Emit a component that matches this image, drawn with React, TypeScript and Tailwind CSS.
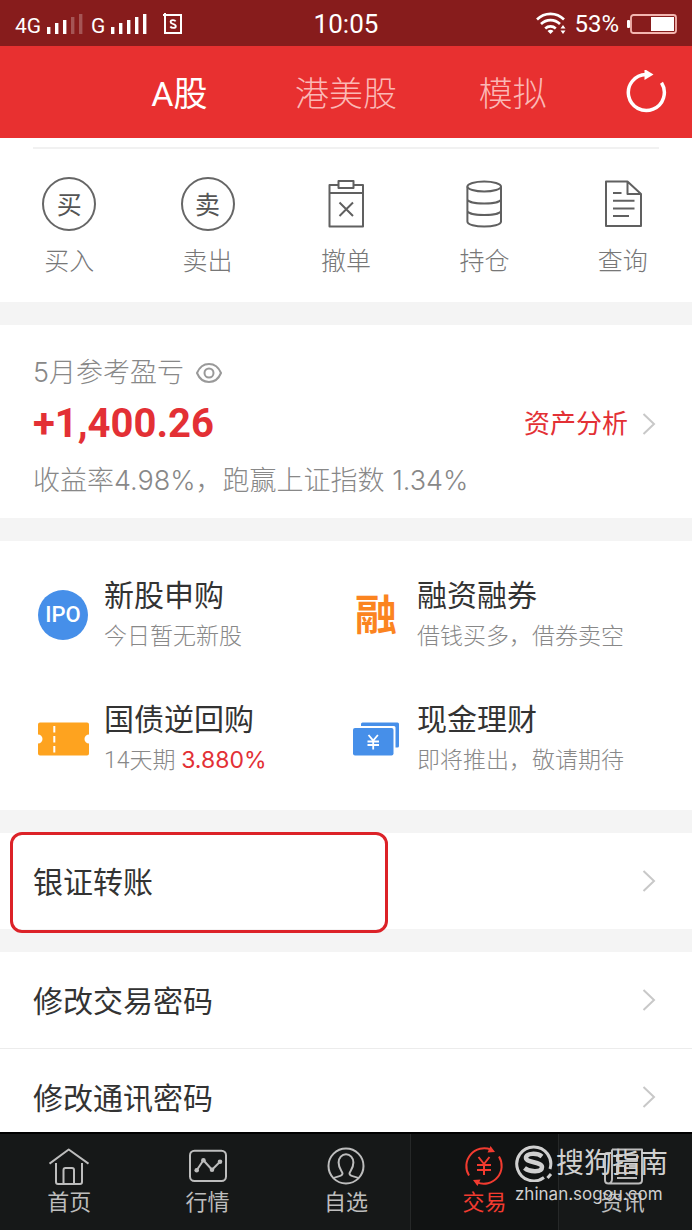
import type { ReactNode } from "react";

const base = "font-['Roboto','Noto_Sans_CJK_SC',sans-serif]";

function Signal({ faded }: { faded: number }) {
  const bars = [7, 11, 14, 17, 20];
  return (
    <svg className="h-5 w-9" viewBox="0 0 36 20" fill="#fff" aria-hidden="true">
      {bars.map((h, i) => (
        <rect key={h} x={i * 8} y={20 - h} width="3.4" height={h} opacity={i >= 5 - faded ? 0.25 : 1} />
      ))}
    </svg>
  );
}

function StatusBar() {
  return (
    <div className="grid h-[46px] shrink-0 grid-cols-3 items-center bg-[#871c1c] px-[15px] pt-px text-white">
      <div className="flex items-center">
        <span className="w-8 pt-1 text-[21px] leading-6">4G</span>
        <Signal faded={2} />
        <span className="ml-2 w-5 pt-1 text-[21px] leading-6">G</span>
        <Signal faded={0} />
        <svg className="ml-4 h-[22px] w-5" viewBox="0 0 20 22" fill="none" stroke="#fff" aria-hidden="true">
          <path d="M2 2h16v18H2z" strokeWidth="2" />
          <path d="M0 2h4M2 0v4" strokeWidth="2" />
          <path d="M12.6 8.4C11.6 6.6 7.6 6.8 7.6 9c0 2.4 5.2 1.6 5.2 4.2 0 2.3-4.4 2.3-5.4.3" strokeWidth="1.8" />
        </svg>
      </div>
      <div className="text-center text-[26px] leading-8">10:05</div>
      <div className="flex items-center justify-end">
        <svg className="h-6 w-[30px]" viewBox="0 0 30 24" fill="none" stroke="#fff" strokeWidth="2.6" aria-hidden="true">
          <path d="M1 7.500a19 19 0 0 1 27 0M5 12a13.500 13.500 0 0 1 19 0M9.200 16.500a7.800 7.800 0 0 1 10.600 0" />
          <path d="M11.500 19a4.500 4.500 0 0 1 6 0L14.500 22z" fill="#fff" stroke="none" />
          <path d="m27 13 2.500 3.500h-5zM27 22l2.500-3.500h-5z" fill="#fff" stroke="none" />
        </svg>
        <span className="ml-2 text-[24px] leading-8">53%</span>
        <svg className="ml-2 h-5 w-[50px]" viewBox="0 0 50 20" aria-hidden="true">
          <rect x="0" y="6" width="3" height="8" rx="1" fill="#fff" />
          <rect x="4" y="1" width="45" height="18" rx="2.5" fill="none" stroke="#f3b5b0" strokeWidth="1.8" />
          <rect x="24" y="3" width="23" height="14" fill="#fff" />
        </svg>
      </div>
    </div>
  );
}

function Header() {
  return (
    <header className="grid h-[92px] shrink-0 grid-cols-[96px_1fr_1fr_1fr_96px] items-center bg-[#e83030] text-[34px] leading-[48px] font-light">
      <span />
      <button className="pt-1 font-normal text-white">A股</button>
      <button className="pt-1 text-[#fbb8b5]">港美股</button>
      <button className="pt-1 text-[#fbb8b5]">模拟</button>
      <button aria-label="刷新" className="flex justify-center pl-1">
        <svg className="size-11" viewBox="0 0 44 44" fill="none">
          <path d="M37.500 12.800A18 18 0 1 1 22 4.500" stroke="#fff" strokeWidth="3.5" />
          <path d="m20.500-1 9 5.500-9 5.500z" fill="#fff" />
        </svg>
      </button>
    </header>
  );
}

function LineIcon({ children }: { children: ReactNode }) {
  return (
    <svg className="size-14" viewBox="0 0 56 56" fill="none" stroke="#606060" strokeWidth="2" strokeLinejoin="round" aria-hidden="true">
      {children}
    </svg>
  );
}

function CircleIcon({ char }: { char: string }) {
  return (
    <span className="flex size-14 items-center justify-center p-px">
      <span className="flex size-full items-center justify-center rounded-full border-2 border-[#666] pt-[3px] text-[25px] leading-9 font-normal text-[#555]">
        {char}
      </span>
    </span>
  );
}

const actions: { label: string; icon: ReactNode }[] = [
  { label: "买入", icon: <CircleIcon char="买" /> },
  { label: "卖出", icon: <CircleIcon char="卖" /> },
  {
    label: "撤单",
    icon: (
      <LineIcon>
        <path d="M20.500 9h-9v41.500h33.500V9h-9.500M11.500 17H45" />
        <path d="M20.500 5h15v7h-15z" />
        <path d="m21.500 26.500 13.500 13.500m0-13.500L21.500 40" />
      </LineIcon>
    ),
  },
  {
    label: "持仓",
    icon: (
      <LineIcon>
        <ellipse cx="28.2" cy="10.5" rx="16.8" ry="5" />
        <path d="M11.400 10.500v35c0 6.700 33.600 6.700 33.600 0v-35M11.400 23c0 6 33.600 6 33.600 0M11.400 34.500c0 6 33.600 6 33.600 0" />
      </LineIcon>
    ),
  },
  {
    label: "查询",
    icon: (
      <LineIcon>
        <path d="M32.500 5.500H11V50h35V18zV18H46" />
        <path d="M18 17h8.500M18 24.700h21.500M18 32.400h21.500M18 40h16" />
      </LineIcon>
    ),
  },
];

function Actions() {
  return (
    <section className="bg-white pt-[9px] pb-[22px]">
      <div className="mx-[33px] h-0.5 bg-[#f1f1f1]" />
      <div className="grid grid-cols-5 pt-[27px]">
        {actions.map((a) => (
          <button key={a.label} className="flex flex-col items-center gap-3 text-[25px] leading-9 font-light text-[#777]">
            {a.icon}
            <span>{a.label}</span>
          </button>
        ))}
      </div>
    </section>
  );
}

function Chevron() {
  return (
    <svg className="h-[22px] w-[14px]" viewBox="0 0 14 22" fill="none" stroke="#c8c8c8" strokeWidth="2" aria-hidden="true">
      <path d="m1.500 1 10.500 10-10.500 10" />
    </svg>
  );
}

function Profit() {
  return (
    <section className="bg-white pt-7 pr-9 pb-[11px] pl-[33px] font-['Inter','Noto_Sans_CJK_SC',sans-serif] font-light text-[#888]">
      <div className="flex items-center gap-3 text-[27px] leading-10">
        <span>5月参考盈亏</span>
        <button aria-label="隐藏金额">
          <svg className="h-5 w-[26px]" viewBox="0 0 26 20" fill="none" stroke="#999" strokeWidth="2">
            <path d="M1 10C6-2 20-2 25 10 20 22 6 22 1 10z" />
            <circle cx="13" cy="10" r="4.5" />
          </svg>
        </button>
      </div>
      <div className="flex h-[62px] items-center justify-between font-['Roboto','Noto_Sans_CJK_SC',sans-serif]">
        <strong className="text-[40px] leading-[62px] font-bold text-[#e33035]">+1,400.26</strong>
        <a href="#analysis" className="flex items-center gap-[14px] text-[26px] leading-10 font-normal text-[#e33035]">
          资产分析
          <Chevron />
        </a>
      </div>
      <p className="text-[27px] leading-[52px]">收益率4.98%，跑赢上证指数 1.34%</p>
    </section>
  );
}

const products: { title: string; sub: ReactNode; icon: ReactNode }[] = [
  {
    title: "新股申购",
    sub: "今日暂无新股",
    icon: (
      <span className="flex size-[50px] items-center justify-center rounded-full bg-[#468fe9] text-[22px] leading-none font-medium text-white">
        IPO
      </span>
    ),
  },
  {
    title: "融资融券",
    sub: "借钱买多，借券卖空",
    icon: <span className="pt-0.5 text-[42px] leading-[50px] font-bold text-[#fb8420]">融</span>,
  },
  {
    title: "国债逆回购",
    sub: (
      <>
        14天期 <span className="font-['Inter',sans-serif] leading-none font-normal text-[#e33035]">3.880%</span>
      </>
    ),
    icon: (
      <svg className="h-[34px] w-[51px]" viewBox="0 0 51 34" aria-hidden="true">
        <path d="M2 .5h47q2 0 2 2v10a4.500 4.500 0 0 0 0 9v10q0 2-2 2H2q-2 0-2-2v-10a4.500 4.500 0 0 0 0-9v-10q0-2 2-2z" fill="#fea31f" />
        <path d="M16.300 4v6.500m0 3.500v6.500m0 3.500v6.500" stroke="#fff" strokeWidth="2" />
      </svg>
    ),
  },
  {
    title: "现金理财",
    sub: "即将推出，敬请期待",
    icon: (
      <svg className="h-[34px] w-[46px]" viewBox="0 0 46 34" fill="#468fe9" aria-hidden="true">
        <path d="M8 2q0-1.500 1.500-1.500h35Q46 .5 46 2v22q0 1.500-1.500 1.500h-2V5.500q0-1.500-1.500-1.500H8z" />
        <rect x="0" y="6" width="40.5" height="27.5" rx="2" />
        <path d="m15.500 13 4.700 5.500 4.700-5.500M14.500 19.500h11.500M14.500 23h11.500M20.200 18.500v9" fill="none" stroke="#fff" strokeWidth="1.8" />
      </svg>
    ),
  },
];

function Products() {
  return (
    <section className="grid grid-cols-2 bg-white px-[33px] pt-3 pb-[9px]">
      {products.map((p) => (
        <button key={p.title} className="flex items-center gap-[11px] py-[21px] text-left">
          <span className="flex w-[60px] shrink-0 justify-center">{p.icon}</span>
          <span className="whitespace-nowrap">
            <span className="block text-[30px] leading-[44px] text-[#333]">{p.title}</span>
            <span className="block text-[23px] leading-[38px] font-light text-[#888]">{p.sub}</span>
          </span>
        </button>
      ))}
    </section>
  );
}

function Row({ label }: { label: string }) {
  return (
    <a href="#settings" className="flex h-24 shrink-0 items-center justify-between bg-white pr-9 pl-[33px] text-[30px] leading-[44px] text-[#333]">
      <span className="pt-1">{label}</span>
      <Chevron />
    </a>
  );
}

function NavIcon({ children }: { children: ReactNode }) {
  return (
    <svg className="size-10" viewBox="0 0 40 40" fill="none" stroke="currentColor" strokeWidth="2" strokeLinejoin="round" aria-hidden="true">
      {children}
    </svg>
  );
}

const tabs: { label: string; active?: boolean; icon: ReactNode }[] = [
  {
    label: "首页",
    icon: <path d="M.5 17.700 19.700 3.500l19.800 14.200M7 17v19q0 2 2 2h22q2 0 2-2V17M14.500 38V24q0-2 2-2H23q2 0 2 2v14" />,
  },
  {
    label: "行情",
    icon: (
      <>
        <rect x="2" y="4.7" width="36" height="30.3" rx="4.5" />
        <path d="m8.700 24.300 6.700-10L24 23.700l8-8" />
        <g fill="currentColor" stroke="none">
          <circle cx="8.7" cy="24.3" r="2.3" />
          <circle cx="15.4" cy="14.3" r="2.3" />
          <circle cx="24" cy="23.7" r="2.3" />
          <circle cx="32" cy="15.7" r="2.3" />
        </g>
      </>
    ),
  },
  {
    label: "自选",
    icon: (
      <>
        <circle cx="20" cy="20" r="17.5" />
        <path d="M7 32.500c3-2.500 9.500-1.500 9.500-5 0-2-3.900-4.500-3.900-11a7.400 8.300 0 0 1 14.800 0c0 6.500-3.900 9-3.900 11 0 3.500 6.500 2.500 9.500 5" />
      </>
    ),
  },
  {
    label: "交易",
    active: true,
    icon: (
      <>
        <path d="M5 29.500A17.800 17.800 0 0 1 27 3.700M35 10.500a17.800 17.800 0 0 1-22 25.800" />
        <path d="M26.500 0 31 6l-7.500.5zM13.500 40 9 34l7.500-.5z" fill="currentColor" stroke="none" />
        <path d="m14.500 11 5.500 7 5.500-7M13 19h14M13 24h14M20 18v11" />
      </>
    ),
  },
  {
    label: "资讯",
    icon: (
      <>
        <path d="M9 3.500h30V34q0 3.500-3.500 3.500H5.500Q2 37.500 2 34V9q0-2 2-2h5m0-3.500V33q0 4-3.500 4.500" />
        <path d="M14 9h20v6H14zM14 20h8v7h-8zM26 20h8M26 26h8M14 32h20" />
      </>
    ),
  },
];

function TabBar() {
  return (
    <nav className="relative grid h-[98px] shrink-0 grid-cols-5 border-t-2 border-black bg-[#161818]">
      {tabs.map((t) => (
        <button
          key={t.label}
          className={
            t.active
              ? "-mx-[5px] flex flex-col items-center border-x border-[#262828] bg-[#111313] pt-3 text-[22px] leading-8 text-[#f23b30]"
              : "flex flex-col items-center pt-3 text-[22px] leading-8 text-[#bdbdbd]"
          }
        >
          <NavIcon>{t.icon}</NavIcon>
          <span className="pt-px">{t.label}</span>
        </button>
      ))}
      <div className="pointer-events-none absolute top-2 right-6 text-[#d0d0d0]">
        <div className="flex items-center gap-[3px] text-[28px] leading-[40px]">
          <svg className="size-[38px]" viewBox="0 0 38 38" fill="none" stroke="currentColor" aria-hidden="true">
            <path d="M29 33.500A17 17 0 1 1 35 25" strokeWidth="3" />
            <path d="M27 12.500C22 8.500 10.500 9 11 14c.5 5 16 3.500 16 9 0 5.500-12 5.500-17.500 1" strokeWidth="4.5" />
            <path d="m32.500 34 3.500-4" strokeWidth="3" />
          </svg>
          <span className="pt-0.5">搜狗指南</span>
        </div>
        <div className="font-['Inter',sans-serif] text-[17px] leading-5">zhinan.sogou.com</div>
      </div>
    </nav>
  );
}

export default function App() {
  return (
    <div className={`flex h-screen flex-col bg-[#f4f4f4] ${base}`}>
      <StatusBar />
      <Header />
      <main className="flex min-h-0 flex-1 flex-col gap-[23px] overflow-hidden">
        <Actions />
        <Profit />
        <Products />
        <div className="relative shrink-0">
          <Row label="银证转账" />
          <div className="pointer-events-none absolute -top-px left-[10px] h-[101px] w-[378px] rounded-xl border-3 border-[#dc2228]" />
        </div>
        <div className="flex shrink-0 flex-col gap-px bg-[#ececec]">
          <Row label="修改交易密码" />
          <Row label="修改通讯密码" />
        </div>
      </main>
      <TabBar />
    </div>
  );
}
